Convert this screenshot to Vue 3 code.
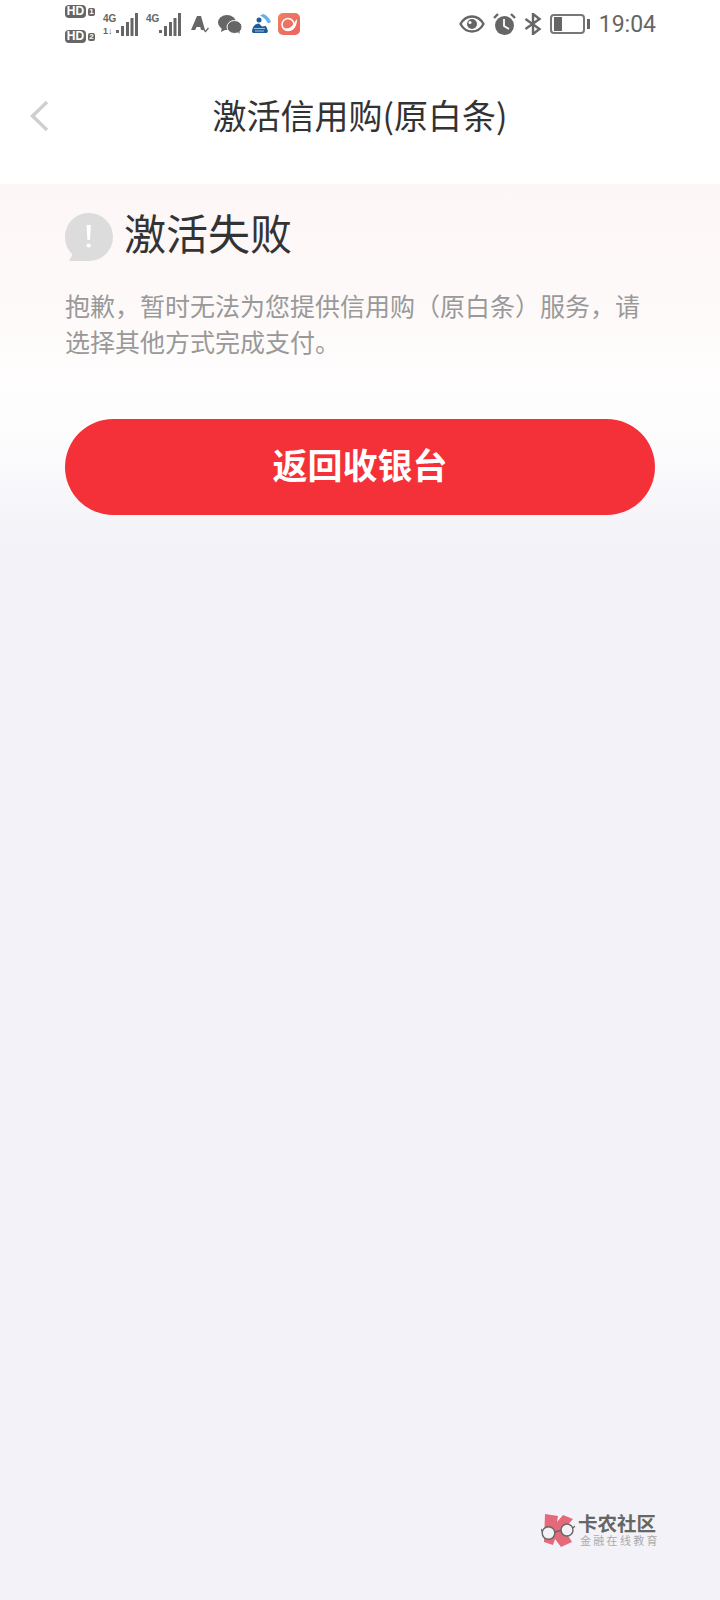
<template>
  <div class="page">
    <div class="status-bar">
      <div class="status-left">
        <div class="sims">
          <div class="sim"><span class="hd">HD</span><span class="slot">1</span></div>
          <div class="sim"><span class="hd">HD</span><span class="slot">2</span></div>
        </div>
        <div class="signal">
          <div class="net"><span>4G</span><span class="net-sub">1↓</span></div>
          <svg width="22" height="24" viewBox="0 0 22 24"><rect v-for="b in bars" :key="b.x" :x="b.x" :y="b.y" width="3" :height="b.h" fill="#666" /></svg>
        </div>
        <div class="signal">
          <div class="net"><span>4G</span></div>
          <svg width="22" height="24" viewBox="0 0 22 24"><rect v-for="b in bars" :key="b.x" :x="b.x" :y="b.y" width="3" :height="b.h" fill="#666" /></svg>
        </div>
        <svg class="app-a" width="18" height="18" viewBox="0 0 18 18"><path d="M0 15 6 1h4l4 14h-4l-.7-3H5.500l-1.300 3z" fill="#666" /><path d="M13 15l1.500 1.500L17.500 13" fill="none" stroke="#666" stroke-width="1.200" /></svg>
        <svg class="app-wx" width="24" height="19" viewBox="0 0 24 19"><ellipse cx="9" cy="7.500" rx="9" ry="7.500" fill="#666" /><path d="M4 12 3 17l6-3z" fill="#666" /><ellipse cx="16.500" cy="12" rx="7.500" ry="6.500" fill="#666" stroke="#fff" /><path d="M19 16l2.500 3V14z" fill="#666" /></svg>
        <svg class="app-blue" width="20" height="20" viewBox="0 0 20 20">
          <path d="M8 1.500 11 0c3.500 1 6.500 4 8 8l-3 1.500C14.500 6 11.500 3 8 1.500z" fill="#6bb0e0" />
          <circle cx="7" cy="6" r="2.500" fill="#1f5a99" />
          <path d="M0 18c0-5 3-8.500 7-8.500l3 3 4-.5 2 5-1 2H1z" fill="#1f5a99" />
          <path d="M2 14.500h11M3 17h9" stroke="#9cc4e4" stroke-width="1" />
        </svg>
        <div class="app-orange"><svg width="20" height="20" viewBox="0 0 20 20"><circle cx="9" cy="10.500" r="6" fill="none" stroke="#fff" stroke-width="1.500" /><path d="M18 5c0 7-3 12-9 12-3 0-5.500-2-6-5 2 2.500 5 3 8 1.500 3-1.500 4-5 7-8.500z" fill="#fff" /></svg></div>
      </div>
      <div class="status-right">
        <svg width="26" height="18" viewBox="0 0 26 18"><path d="M1.500 9C4 4.500 8 1.500 13 1.500S22 4.500 24.500 9C22 13.500 18 16.500 13 16.500S4 13.500 1.500 9z" fill="none" stroke="#666" stroke-width="2.400" /><circle cx="13" cy="9" r="5" fill="#666" /><circle cx="11" cy="7.500" r="1.500" fill="#fff" /></svg>
        <svg width="23" height="22" viewBox="0 0 23 22"><circle cx="11.500" cy="12.500" r="9.500" fill="#666" /><path d="M11 6v7l5 3" fill="none" stroke="#fff" stroke-width="1.800" /><path d="M1 5l4-4M22 5l-4-4" stroke="#666" stroke-width="2.400" /></svg>
        <svg width="18" height="22" viewBox="0 0 18 22"><path d="M1.500 6l14 10L9 21V1l6.500 5-14 10" fill="none" stroke="#666" stroke-width="2.400" /></svg>
        <div class="battery"><div class="battery-body"><div class="battery-level"></div></div><div class="battery-cap"></div></div>
        <span class="clock">19:04</span>
      </div>
    </div>

    <div class="nav-bar">
      <svg class="back" width="20" height="32" viewBox="0 0 20 32"><path d="M18 2 3.500 16 18 30" fill="none" stroke="#cfcfcf" stroke-width="3.400" /></svg>
      <h1 class="nav-title">激活信用购(原白条)</h1>
    </div>

    <div class="content">
      <div class="result-title">
        <svg width="48" height="48" viewBox="0 0 48 48">
          <path d="M24 0a24 24 0 1 1 0 48H4l3.500-6.500A24 24 0 0 1 24 0z" fill="#dcdcdc" />
          <path d="M21.500 12h4.400l-.9 15h-2.600z" fill="#fff" />
          <circle cx="23.700" cy="32.500" r="2.100" fill="#fff" />
        </svg>
        <span class="result-text">激活失败</span>
      </div>
      <p class="result-desc">抱歉，暂时无法为您提供信用购（原白条）服务，请选择其他方式完成支付。</p>
      <button class="back-btn"><span>返回收银台</span></button>
    </div>

    <div class="watermark">
      <svg width="34" height="36" viewBox="0 0 34 36">
        <path d="M4 2l13 2-1 6 6-7 10 4-9 10 8 13-11 5-6-8-2 6-9-3z" fill="#e4697a" />
        <circle cx="7.500" cy="21" r="6.300" fill="#f3f2f8" stroke="#666" stroke-width="1.400" />
        <circle cx="26" cy="18" r="6" fill="#f3f2f8" stroke="#666" stroke-width="1.400" />
        <path d="M13.500 20l6.500-1.500M1.500 20 0 17M32 16l2-2" stroke="#666" stroke-width="1.400" fill="none" />
      </svg>
      <div class="wm-text">
        <div class="wm-name">卡农社区</div>
        <div class="wm-sub">金融在线教育</div>
      </div>
    </div>
  </div>
</template>

<script setup>
const bars = [
  { x: 0, y: 18, h: 3 },
  { x: 5, y: 14, h: 10 },
  { x: 10, y: 10, h: 14 },
  { x: 14.500, y: 6, h: 18 },
  { x: 19, y: 1, h: 23 },
]
</script>

<style>
html, body {
  margin: 0;
  background: #f3f2f8;
}
</style>

<style scoped>
.page {
  width: 720px;
  height: 1600px;
  overflow: hidden;
  display: flex;
  flex-direction: column;
  position: relative;
  font-family: "Noto Sans CJK SC", "Liberation Sans", sans-serif;
  background: #f3f2f8;
}
.status-bar {
  height: 48px;
  background: #fff;
  display: flex;
  justify-content: space-between;
  align-items: center;
  padding: 0 64px 0 65px;
}
.status-left, .status-right {
  display: flex;
  align-items: center;
}
.sims {
  display: flex;
  flex-direction: column;
  gap: 12px;
}
.sim {
  display: flex;
  align-items: center;
  gap: 2px;
}
.hd {
  width: 21px;
  height: 13px;
  border-radius: 4px;
  background: #666;
  color: #fff;
  font: bold 12px/13px "Liberation Sans", sans-serif;
  text-align: center;
}
.slot {
  width: 7px;
  height: 8px;
  border-radius: 2px;
  background: #666;
  color: #fff;
  font: bold 8px/8px "Liberation Sans", sans-serif;
  text-align: center;
}
.signal {
  display: flex;
  margin-left: 8px;
  height: 24px;
}
.net {
  display: flex;
  flex-direction: column;
  width: 13px;
  padding-top: 1px;
  color: #666;
  font: bold 10px/11px "Liberation Sans", sans-serif;
}
.net-sub {
  font-size: 9px;
  line-height: 8px;
  margin-top: 3px;
}
.app-a {
  margin-left: 10px;
}
.app-wx {
  margin-left: 9px;
}
.app-blue {
  margin-left: 10px;
}
.app-orange {
  width: 22px;
  height: 22px;
  margin-left: 6px;
  border-radius: 5px;
  background: linear-gradient(135deg, #ee7f63, #ee6360);
  display: flex;
  align-items: center;
  justify-content: center;
}
.status-right > svg {
  margin-right: 8px;
}
.battery {
  display: flex;
  align-items: center;
  gap: 2px;
  margin-right: 9px;
}
.battery-body {
  width: 35px;
  height: 20px;
  border: 2px solid #777;
  border-radius: 4px;
  padding: 1px 2px;
  box-sizing: border-box;
}
.battery-level {
  width: 8px;
  height: 100%;
  background: #666;
}
.battery-cap {
  width: 3px;
  height: 10px;
  background: #666;
}
.clock {
  font: 23px/1 Roboto, "Liberation Sans", sans-serif;
  color: #666;
}
.nav-bar {
  height: 136px;
  background: #fff;
  display: flex;
  align-items: center;
  justify-content: center;
  position: relative;
}
.back {
  position: absolute;
  left: 29px;
  top: 52px;
}
.nav-title {
  margin: 0 0 4px;
  font-size: 34px;
  font-weight: 400;
  color: #333;
}
.content {
  flex: 1;
  padding: 29px 64px 0 65px;
  background: linear-gradient(180deg, #fdf6f6 0, #fef9f9 116px, #fffdfd 196px, #fdfdfe 246px, #f3f2f8 356px);
}
.result-title {
  display: flex;
  align-items: center;
  gap: 11px;
  color: #333;
  font-size: 42px;
  line-height: 48px;
}
.result-text {
  margin-top: -10px;
}
.result-desc {
  margin: 26px 0 0;
  font-size: 25px;
  line-height: 36px;
  color: #999;
}
.back-btn {
  display: block;
  width: 590px;
  height: 96px;
  margin-top: 60px;
  padding: 0 0 8px;
  border: 0;
  border-radius: 48px;
  background: #f43039;
  color: #fff;
  font-family: inherit;
  font-size: 35px;
  font-weight: 700;
}
.watermark {
  position: absolute;
  left: 541px;
  top: 1512px;
  display: flex;
  align-items: flex-start;
  gap: 3px;
}
.wm-name {
  font-size: 19.500px;
  line-height: 22px;
  font-weight: 700;
  color: #666;
}
.wm-sub {
  padding-left: 2px;
  font-size: 11px;
  line-height: 12px;
  letter-spacing: 2.300px;
  color: #aaa;
}
</style>
